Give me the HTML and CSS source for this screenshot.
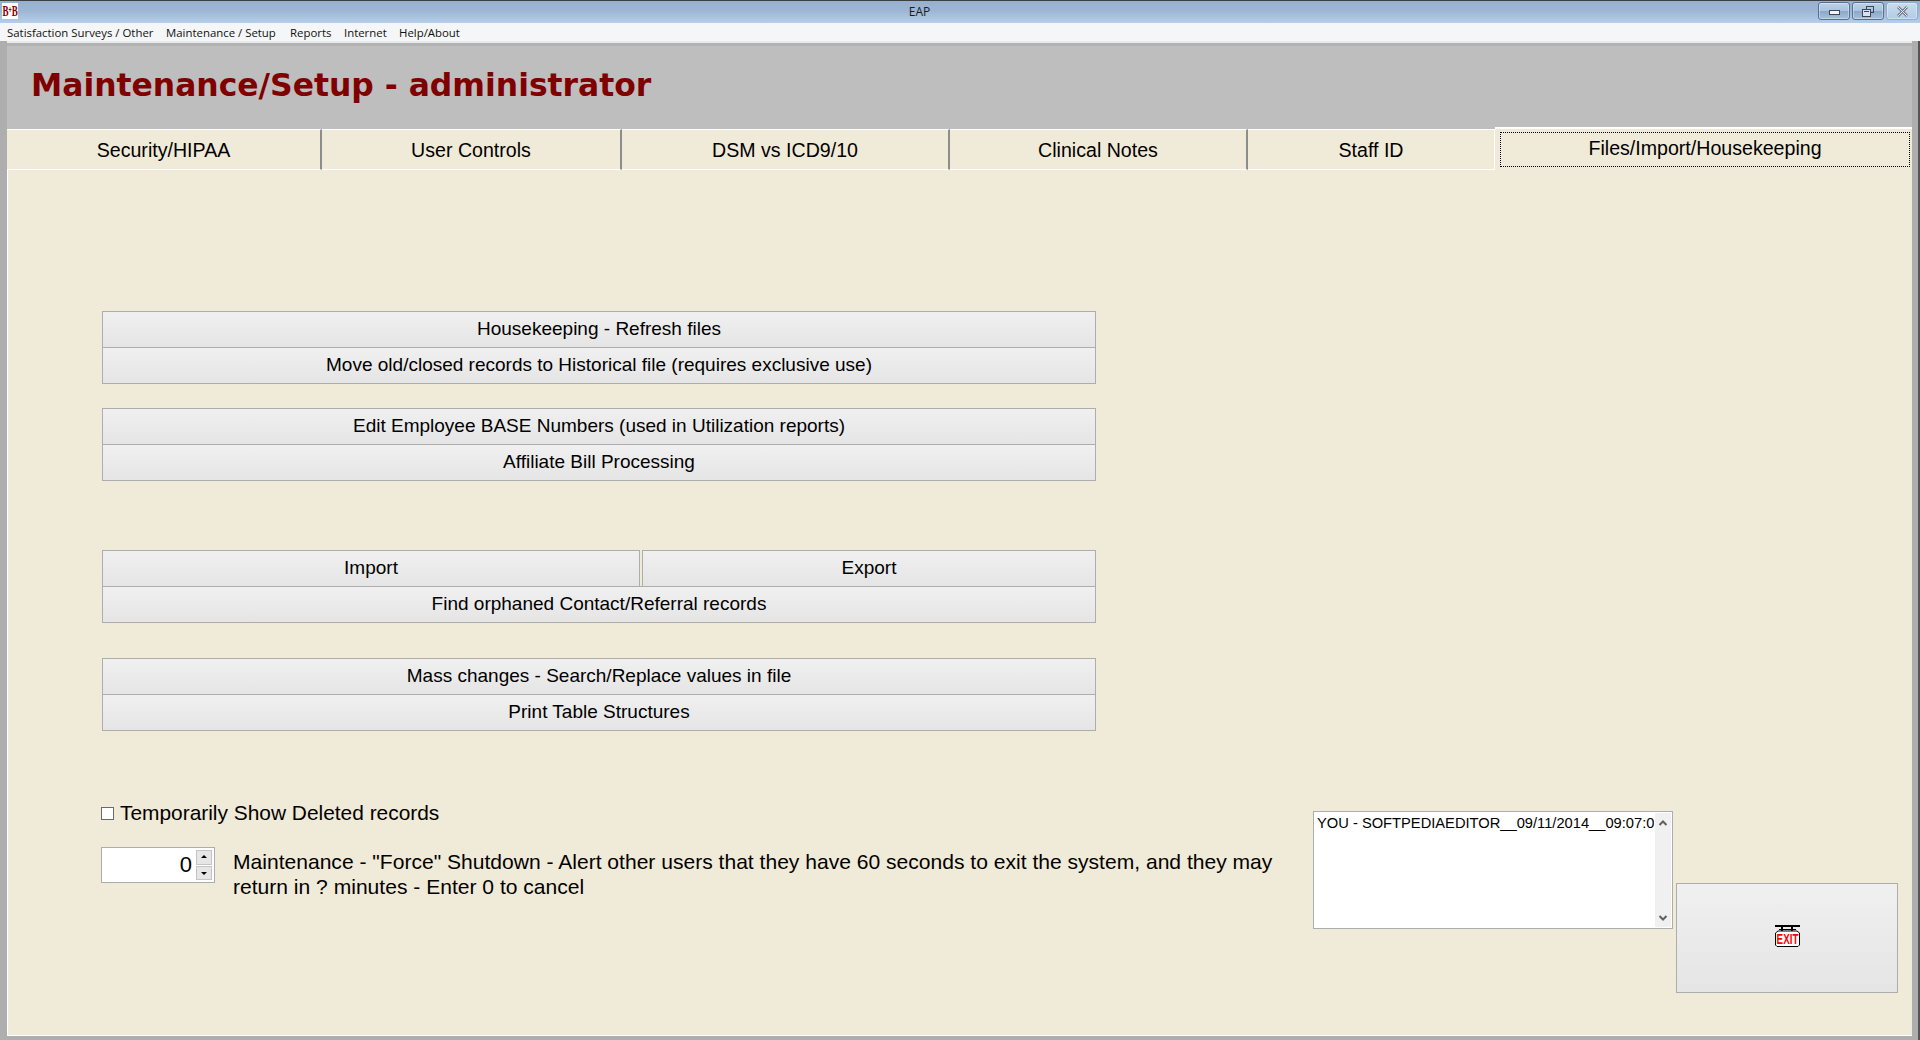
FILE: index.html
```html
<!DOCTYPE html>
<html lang="en">
<head>
<meta charset="utf-8">
<title>EAP</title>
<link rel="stylesheet" href="styles.css">
</head>
<body>
<div class="window">
  <header class="titlebar">
    <svg class="logo" width="16" height="16" viewBox="0 0 16 16"><rect width="16" height="16" fill="#fff"/><text transform="translate(0.500 13) scale(.6 1)" class="logo-b">B<tspan class="logo-plus" dy="-3">+</tspan><tspan dy="3">B</tspan></text></svg>
    <span class="title">EAP</span>
    <div class="controls">
      <div class="ctl ctl-min"><span class="min-glyph"></span></div>
      <div class="ctl ctl-max"><svg width="13" height="11" viewBox="0 0 13 11"><rect x="4.500" y="0.500" width="7" height="6" fill="none" stroke="#3c4654"/><rect x="0.500" y="3.500" width="8" height="7" fill="#d8e2ee" stroke="#3c4654"/><path d="M2 5.500h5" stroke="#3c4654"/></svg></div>
      <div class="ctl ctl-close"><svg width="13" height="11" viewBox="0 0 13 11"><path d="M2 1l9 9M11 1l-9 9" stroke="#6f7a87" stroke-width="2.800"/><path d="M2 1l9 9M11 1l-9 9" stroke="#dfe7f0" stroke-width="1"/></svg></div>
    </div>
  </header>
  <nav class="menubar">
    <span class="m1">Satisfaction Surveys / Other</span>
    <span class="m2">Maintenance / Setup</span>
    <span class="m3">Reports</span>
    <span class="m4">Internet</span>
    <span class="m5">Help/About</span>
  </nav>
  <div class="frame">
    <div class="heading"><h1>Maintenance/Setup - administrator</h1></div>
    <div class="tabs">
      <div class="tab t1">Security/HIPAA</div>
      <div class="tab t2">User Controls</div>
      <div class="tab t3">DSM vs ICD9/10</div>
      <div class="tab t4">Clinical Notes</div>
      <div class="tab t5">Staff ID</div>
      <div class="tab active"><span class="focus">Files/Import/Housekeeping</span></div>
    </div>
    <main class="panel">
      <div class="group g1">
        <button class="btn">Housekeeping - Refresh files</button>
        <button class="btn">Move old/closed records to Historical file (requires exclusive use)</button>
      </div>
      <div class="group g2">
        <button class="btn">Edit Employee BASE Numbers (used in Utilization reports)</button>
        <button class="btn">Affiliate Bill Processing</button>
      </div>
      <div class="group g3">
        <div class="split">
          <button class="btn b-import">Import</button>
          <button class="btn b-export">Export</button>
        </div>
        <button class="btn">Find orphaned Contact/Referral records</button>
      </div>
      <div class="group g4">
        <button class="btn">Mass changes - Search/Replace values in file</button>
        <button class="btn">Print Table Structures</button>
      </div>
      <div class="bottom">
        <div class="options">
          <label class="check"><span class="box"></span>Temporarily Show Deleted records</label>
          <div class="force">
            <div class="spin">
              <span class="val">0</span>
              <div class="arrows"><span class="up"></span><span class="down"></span></div>
            </div>
            <p>Maintenance - "Force" Shutdown - Alert other users that they have 60 seconds to exit the system, and they may return in ? minutes - Enter 0 to cancel</p>
          </div>
        </div>
        <div class="list">
          <div class="list-text">YOU - SOFTPEDIAEDITOR__09/11/2014__09:07:04</div>
          <div class="scroll">
            <svg width="10" height="8" viewBox="0 0 10 8"><path d="M1.500 6L5 2.500 8.500 6" fill="none" stroke="#606060" stroke-width="2"/></svg>
            <svg width="10" height="8" viewBox="0 0 10 8"><path d="M1.500 2L5 5.500 8.500 2" fill="none" stroke="#606060" stroke-width="2"/></svg>
          </div>
        </div>
        <button class="btn exit" aria-label="Exit">
          <svg width="25" height="22" viewBox="0 0 25 22"><path d="M0 0h25v2H0zM4 4h17v1H4zM6 2h2v4H6zM16 2h2v4h-2z" fill="#000"/><path d="M3 6h19l2.500 2v12l-1.500 1.500H2L.5 20V8z" fill="#fff" stroke="#000"/><text transform="translate(12.500 18.500) scale(.7 1)" class="exit-text">EXIT</text></svg>
        </button>
      </div>
    </main>
  </div>
</div>
</body>
</html>
```

FILE: styles.css
```css
* { box-sizing: border-box; }
html, body { margin: 0; padding: 0; }
body { width: 1920px; height: 1040px; overflow: hidden; font-family: "Liberation Sans", Arial, sans-serif; color: #000; background: #aeaeae; }
.window { display: flex; flex-direction: column; height: 1040px; border-right: 2px solid #555; }

.titlebar { display: flex; align-items: flex-start; height: 23px; flex: none; position: relative; border-top: 1px solid #3d3f42; margin-right: -2px;
  background: linear-gradient(#96b0cd 0, #9cb6d3 45%, #b5cfeb 100%); }
.logo { margin: 2px 0 0 2px; }
.logo-b { font: bold 15px "Liberation Serif", serif; fill: #800000; }
.logo-plus { font: bold 9px "Liberation Sans", sans-serif; fill: #800000; }
.title { position: absolute; left: 0; right: 81px; top: 2px; text-align: center; font: 12px "Open Sans", sans-serif; color: #1c1c1c; }
.controls { display: flex; gap: 2px; margin: 1px 2px 0 auto; }
.ctl { height: 18px; border: 1px solid #58708e; border-radius: 3px; display: flex; align-items: center; justify-content: center;
  background: linear-gradient(#bcd1e8 0, #a9c3de 50%, #8ba8c7 52%, #a5c0db 100%); box-shadow: inset 0 0 0 1px rgba(255,255,255,.35); }
.ctl-min { width: 32px; }
.ctl-max { width: 32px; }
.ctl-close { width: 32px; border-color: #93acc8; background: linear-gradient(#c9dcf0, #b3cce6); }
.min-glyph { width: 11px; height: 5px; background: #f2f5f9; border: 1px solid #3c4654; margin-top: 3px; }

.menubar { height: 18px; flex: none; display: flex; background: #f5f6f7; font: 11.400px "Open Sans", sans-serif; color: #111; padding: 3px 0 0 7px; white-space: nowrap; line-height: 14px; margin-right: -2px; }
.m1 { width: 159px; } .m2 { width: 124px; } .m3 { width: 54px; } .m4 { width: 55px; }

.frame { flex: 1; min-height: 0; display: flex; flex-direction: column; margin: 2px 6px 4px 7px; background: #b2b2b2; padding-top: 3px; box-shadow: 0 -2px 0 #e9eaeb; }
.heading { height: 83px; flex: none; background: #bebebe; padding: 19px 0 0 24px; }
h1 { margin: 0; font: bold 31.400px/40px "DejaVu Sans", Verdana, sans-serif; color: #800000; white-space: nowrap; }

.tabs { display: flex; height: 41px; flex: none; background: #bebebe; font-size: 19.600px; }
.tab { display: flex; align-items: center; justify-content: center; background: #f0ead8; border-top: 1px solid #fff; border-bottom: 1px solid #fff; padding-top: 1px; }
.t1 { width: 315px; border-right: 2px solid #8d8d8d; }
.t2 { width: 300px; border-right: 2px solid #8d8d8d; }
.t3 { width: 328px; border-right: 2px solid #8d8d8d; }
.t4 { width: 298px; border-right: 2px solid #8d8d8d; }
.t5 { width: 247px; border-right: 1px solid #fff; }
.active { flex: 1; height: 43px; margin-top: -2px; border-bottom: 0; padding: 3px 2px 0 5px; align-items: flex-start; position: relative; border-top: 2px solid #fff; }
.focus { display: block; width: 100%; height: 35px; border: 1px dotted #000; text-align: center; line-height: 31px; }

.panel { flex: 1; min-height: 0; background: #f0ead8; border-left: 1px solid #fff; border-bottom: 1px solid #fff; padding: 141px 0 0 94px; }
.group { width: 994px; display: flex; flex-direction: column; }
.g2 { margin-top: 24px; }
.g3 { margin-top: 69px; }
.g4 { margin-top: 35px; }
.btn { display: block; width: 100%; height: 37px; margin: 0; padding: 0 0 2px; border: 1px solid #adadad; background: linear-gradient(#f0f0f0, #e5e5e5); font: 19px "Liberation Sans", Arial, sans-serif; color: #000; text-align: center; }
.group > .btn + .btn, .split + .btn { margin-top: -1px; }
.split { display: flex; gap: 2px; }
.b-import { width: 538px; }
.b-export { flex: 1; width: auto; }

.bottom { display: flex; align-items: flex-start; margin: 76px 0 0 -1px; }
.options { width: 1212px; flex: none; font-size: 20.900px; margin-top: -9px; }
.check { display: flex; align-items: center; height: 30px; }
.box { width: 13px; height: 13px; margin: 1px 6px 0 0; border: 1px solid #6a6a6a; background: #fff; }
.force { display: flex; margin-top: 19px; }
.spin { width: 114px; height: 36px; flex: none; border: 1px solid #adadad; background: #fff; display: flex; justify-content: flex-end; align-items: center; }
.val { padding-right: 4px; font-size: 22px; }
.arrows { width: 16px; height: 30px; margin-right: 2px; display: flex; flex-direction: column; gap: 1px; }
.arrows span { flex: 1; background: #e6e6e6; border: 1px solid #c4c4c4; position: relative; }
.arrows span::after { content: ""; position: absolute; left: 4px; border-left: 3px solid transparent; border-right: 3px solid transparent; }
.up::after { top: 4px; border-bottom: 3px solid #000; }
.down::after { top: 5px; border-top: 3px solid #000; }
.force p { margin: 3px 0 0 18px; width: 1060px; font-size: 21.070px; line-height: 24.500px; }

.list { width: 360px; height: 118px; flex: none; margin-top: 4px; border: 1px solid #adadad; background: #fff; display: flex; overflow: hidden; }
.list-text { width: 340px; flex: none; overflow: hidden; white-space: nowrap; font-size: 14.700px; line-height: 20px; padding: 1px 0 0 3px; }
.scroll { flex: 1; margin: 1px; background: #f0f0f0; display: flex; flex-direction: column; justify-content: space-between; align-items: center; padding: 6px 0 5px; }
.exit { width: 222px; height: 110px; flex: none; margin: 76px 0 0 3px; padding: 0 0 4px; }
.exit svg { display: block; margin: 0 auto; }
.exit-text { font: bold 14px "Liberation Sans", sans-serif; fill: #f00; text-anchor: middle; }
```
